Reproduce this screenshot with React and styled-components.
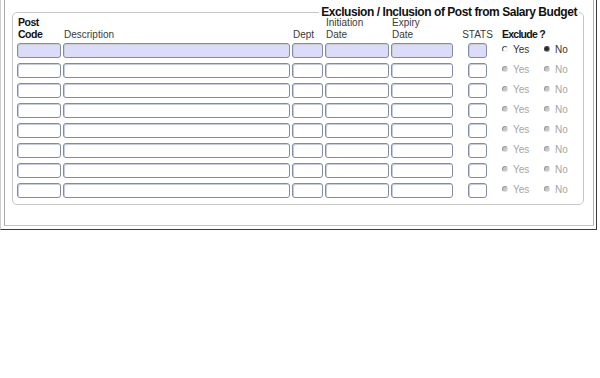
import styled, { createGlobalStyle } from 'styled-components'

const GlobalStyle = createGlobalStyle`
  html, body {
    margin: 0;
    padding: 0;
    background: #fff;
  }
  body {
    font-family: "Liberation Sans", Arial, sans-serif;
  }
`

const Frame = styled.div`
  box-sizing: border-box;
  width: 597px;
  padding: 0 2px 3px 3px;
  border-left: 1px solid #cfcfcf;
  border-right: 1px solid #3c3c3c;
  border-bottom: 1px solid #3c3c3c;
`

const Panel = styled.div`
  padding: 4px 9px 20px 7px;
  border-left: 1px solid #a8a8a8;
  border-right: 1px solid #b4b4b4;
  border-bottom: 1px solid #c4c4c4;
`

const Group = styled.fieldset`
  margin: 0;
  min-width: 0;
  padding: 0 0 6px 4px;
  border: 1px solid #c6c6c6;
  border-radius: 5px;
`

const Legend = styled.legend`
  margin-left: auto;
  margin-right: 4px;
  padding: 1px 2px;
  font-size: 12px;
  line-height: 14px;
  font-weight: bold;
  letter-spacing: -0.45px;
  color: #111;
`

const Columns = styled.div`
  display: grid;
  grid-template-columns: 44px 227px 31px 64px 62px 44px 1fr;
  column-gap: 2px;
`

const HeaderRow = styled(Columns)`
  margin-top: -3px;
  margin-bottom: 2px;
  align-items: end;
`

const Heading = styled.div`
  padding-left: 1px;
  font-size: ${p => (p.$bold ? '10.5px' : '10px')};
  line-height: ${p => (p.$top ? '11px' : '13px')};
  font-weight: ${p => (p.$bold ? 'bold' : 'normal')};
  letter-spacing: ${p => (p.$tight ? '-0.75px' : p.$bold ? '-0.5px' : '0')};
  color: ${p => (p.$bold ? '#111' : '#3a3a3a')};
  text-align: ${p => (p.$center ? 'center' : 'left')};
  white-space: nowrap;
`

const Rows = styled.div`
  display: grid;
  row-gap: 5px;
`

const Row = styled(Columns)`
  height: 15px;
  align-items: center;
`

const Input = styled.input`
  box-sizing: border-box;
  display: block;
  width: ${p => (p.$narrow ? '19px' : '100%')};
  height: 15px;
  margin: 0;
  padding: 0 2px;
  justify-self: center;
  border: 1px solid #7f8ca4;
  border-radius: 3px;
  background: ${p => (p.$active ? '#dcdcf9' : '#fff')};
  box-shadow: inset 1px 1px 0 #c8cedb;
  font: 10px "Liberation Sans", Arial, sans-serif;
  outline: none;
`

const Choices = styled.div`
  display: flex;
  align-items: center;
  height: 15px;
  padding-left: 1px;
`

const Option = styled.label`
  display: flex;
  align-items: center;
  width: 42px;
  font-size: 10px;
  line-height: 12px;
  margin-top: -1px;
  color: ${p => (p.$disabled ? '#a6a6a6' : '#333')};
`

const Radio = styled.span`
  box-sizing: border-box;
  flex: none;
  width: 6px;
  height: 6px;
  margin: -3px 5px 0 0;
  border-radius: 50%;
  border: 1px solid;
  ${p =>
    p.$disabled
      ? 'background: #c6c6c6; border-color: #9a9a9a #dedede #dedede #9a9a9a;'
      : p.$checked
      ? 'background: #2a2a2a; border-color: #444 #999 #999 #444;'
      : 'background: #fff; border-color: #555 #eee #eee #555;'}
`

const rows = Array.from({ length: 8 }, (_, i) => ({ id: i, active: i === 0 }))

const Choice = ({ label, checked, disabled }) => (
  <Option $disabled={disabled}>
    <Radio $checked={checked} $disabled={disabled} />
    {label}
  </Option>
)

export default function App() {
  return (
    <>
      <GlobalStyle />
      <Frame>
        <Panel>
          <Group>
            <Legend>Exclusion / Inclusion of Post from Salary Budget</Legend>
            <HeaderRow>
              <div>
                <Heading $bold $top>Post</Heading>
                <Heading $bold>Code</Heading>
              </div>
              <Heading>Description</Heading>
              <Heading>Dept</Heading>
              <div>
                <Heading $top>Initiation</Heading>
                <Heading>Date</Heading>
              </div>
              <div>
                <Heading $top>Expiry</Heading>
                <Heading>Date</Heading>
              </div>
              <Heading $center>STATS</Heading>
              <Heading $bold $tight>Exclude ?</Heading>
            </HeaderRow>
            <Rows>
              {rows.map(r => (
                <Row key={r.id}>
                  <Input readOnly $active={r.active} />
                  <Input readOnly $active={r.active} />
                  <Input readOnly $active={r.active} />
                  <Input readOnly $active={r.active} />
                  <Input readOnly $active={r.active} />
                  <Input readOnly $narrow $active={r.active} />
                  <Choices>
                    <Choice label="Yes" disabled={!r.active} />
                    <Choice label="No" checked={r.active} disabled={!r.active} />
                  </Choices>
                </Row>
              ))}
            </Rows>
          </Group>
        </Panel>
      </Frame>
    </>
  )
}
